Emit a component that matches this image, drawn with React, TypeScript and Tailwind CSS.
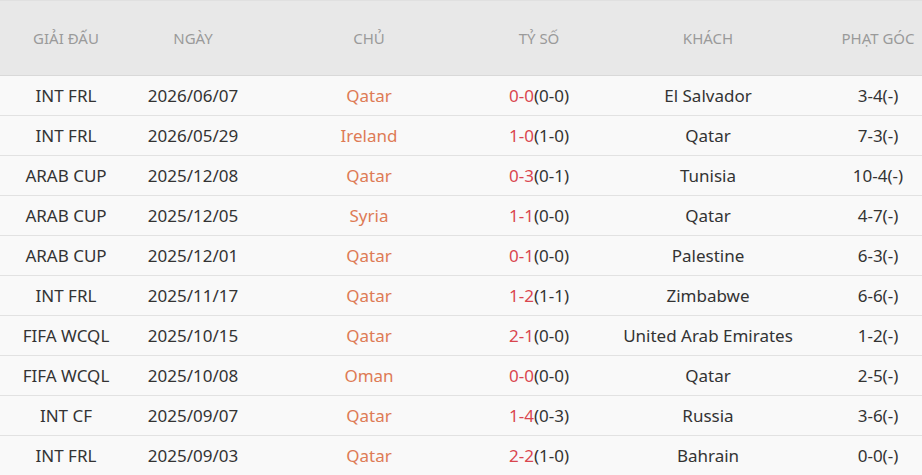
import React from "react";

const rows = [
  ["INT FRL", "2026/06/07", "Qatar", "0-0", "(0-0)", "El Salvador", "3-4(-)"],
  ["INT FRL", "2026/05/29", "Ireland", "1-0", "(1-0)", "Qatar", "7-3(-)"],
  ["ARAB CUP", "2025/12/08", "Qatar", "0-3", "(0-1)", "Tunisia", "10-4(-)"],
  ["ARAB CUP", "2025/12/05", "Syria", "1-1", "(0-0)", "Qatar", "4-7(-)"],
  ["ARAB CUP", "2025/12/01", "Qatar", "0-1", "(0-0)", "Palestine", "6-3(-)"],
  ["INT FRL", "2025/11/17", "Qatar", "1-2", "(1-1)", "Zimbabwe", "6-6(-)"],
  ["FIFA WCQL", "2025/10/15", "Qatar", "2-1", "(0-0)", "United Arab Emirates", "1-2(-)"],
  ["FIFA WCQL", "2025/10/08", "Oman", "0-0", "(0-0)", "Qatar", "2-5(-)"],
  ["INT CF", "2025/09/07", "Qatar", "1-4", "(0-3)", "Russia", "3-6(-)"],
  ["INT FRL", "2025/09/03", "Qatar", "2-2", "(1-0)", "Bahrain", "0-0(-)"],
];

const grid = "grid grid-cols-[132px_122px_230px_110px_228px_100px]";

export default function App() {
  return (
    <div className="w-[922px] h-[475px] overflow-hidden bg-[#f9f9f9]" style={{ fontFamily: '"Noto Sans", "Open Sans", sans-serif' }}>
      <div className={`${grid} h-[76px] items-center bg-[#e8e8e8] border-t border-[#e0e0e0] border-b border-b-[#d9d9d9] text-[15px] text-[#9a9a9a]`}>
        <div className="text-center">GIẢI ĐẤU</div>
        <div className="text-center">NGÀY</div>
        <div className="text-center">CHỦ</div>
        <div className="text-center">TỶ SỐ</div>
        <div className="text-center">KHÁCH</div>
        <div className="text-center pl-3">PHẠT GÓC</div>
      </div>
      {rows.map((r, i) => (
        <div key={i} className={`${grid} h-[40px] items-center border-b border-[#e2e2e2] text-[17px] text-[#333333]`}>
          <div className="text-center">{r[0]}</div>
          <div className="text-center">{r[1]}</div>
          <div className="text-center text-[#de7b55]">{r[2]}</div>
          <div className="text-center">
            <span className="text-[#d9464f]">{r[3]}</span>
            {r[4]}
          </div>
          <div className="text-center">{r[5]}</div>
          <div className="text-center pl-3">{r[6]}</div>
        </div>
      ))}
    </div>
  );
}
